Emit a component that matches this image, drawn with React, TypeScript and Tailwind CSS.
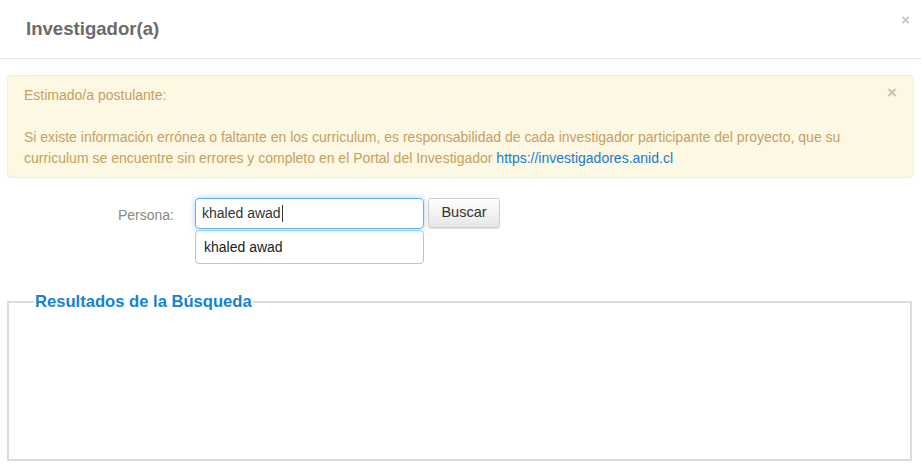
export default function App() {
  return (
    <div className="w-[921px] h-[469px] bg-white overflow-hidden font-['Liberation_Sans',Arial,sans-serif] text-[14px]">
      {/* Header */}
      <div className="relative h-[59px] border-b border-[#e5e5e5] flex items-center pl-[26px]">
        <h4 className="text-[18.6px] font-bold text-[#6b6b6b] leading-none">Investigador(a)</h4>
        <span className="absolute right-[11px] top-[12px] text-[#c4c4c4] text-[15px] font-bold leading-none">×</span>
      </div>

      <div className="px-[7px] pt-[16px]">
        {/* Alerta */}
        <div className="relative bg-[#fcf8e3] border border-[#faebcc] rounded-[4px] pl-[16px] pr-[30px] pt-[9px] pb-[8px] text-[#c5a063] leading-[21px]">
          <p>Estimado/a postulante:</p>
          <p className="mt-[21px]">
            Si existe información errónea o faltante en los curriculum, es responsabilidad de cada investigador participante del proyecto, que su curriculum se encuentre sin errores y completo en el Portal del Investigador{' '}
            <a className="text-[#1a7ccf]" href="#">https://investigadores.anid.cl</a>
          </p>
          <span className="absolute right-[16px] top-[6px] text-[#c2c2b4] text-[17px] font-bold">×</span>
        </div>

        {/* Busqueda */}
        <div className="flex items-start mt-[20px]">
          <label className="w-[188px] text-right text-[#888] pt-[7px] pr-[21px]">Persona:</label>
          <div className="flex flex-col w-[229px]">
            <div className="h-[31px] border border-[#66afe9] rounded-[4px] shadow-[0_0_6px_rgba(102,175,233,0.55)] flex items-center px-[6px] text-[#333]">
              khaled awad<span className="w-px h-[17px] bg-[#333] ml-[1px]" />
            </div>
            <div className="h-[34px] mt-px border border-[#9fcdf0] rounded-[4px] flex items-center px-[8px] text-[#222]">khaled awad</div>
          </div>
          <button className="ml-[4px] h-[30px] w-[72px] border border-[#ccc] rounded-[3px] bg-gradient-to-b from-[#fff] to-[#e6e6e6] text-[#333] text-[14.5px] shadow-[0_1px_1px_rgba(0,0,0,0.1)]">
            Buscar
          </button>
        </div>

        {/* Resultados */}
        <fieldset className="mt-[26px] border-2 border-[#dcdcdc] h-[171px] mr-[2px] px-[25px]">
          <legend className="text-[#1582d4] font-bold text-[16.6px] px-px">Resultados de la Búsqueda</legend>
        </fieldset>
      </div>
    </div>
  )
}
